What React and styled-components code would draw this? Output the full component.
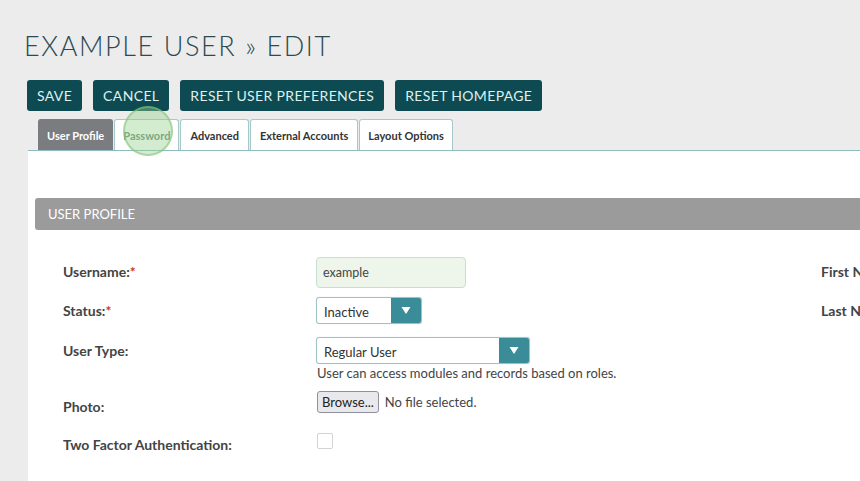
import React from 'react';
import styled, { createGlobalStyle } from 'styled-components';

const GlobalStyle = createGlobalStyle`
  html, body {
    margin: 0;
    padding: 0;
    background: #ececec;
    overflow: hidden;
  }
  body {
    font-family: Lato, "Open Sans", sans-serif;
    color: #444;
  }
`;

const Page = styled.div`
  position: relative;
  width: 860px;
  height: 481px;
  padding-top: 30px;
  box-sizing: border-box;
  display: flex;
  flex-direction: column;
  overflow: hidden;
`;

const Title = styled.h1`
  margin: 0 0 0 24px;
  font-weight: 300;
  font-size: 27px;
  line-height: 32px;
  letter-spacing: 1.6px;
  color: #2c4a50;
`;

const Toolbar = styled.div`
  display: flex;
  gap: 11px;
  margin: 18px 0 0 27px;
`;

const ActionButton = styled.button`
  height: 31px;
  padding: 0 10px;
  border: none;
  border-radius: 3px;
  background: #0e4a51;
  color: #dff0ef;
  font-family: Lato, sans-serif;
  font-size: 14px;
  letter-spacing: 0.35px;
  text-transform: uppercase;
`;

const TabBar = styled.div`
  display: flex;
  gap: 2px;
  margin: 8px 0 0 28px;
  padding-left: 10px;
  border-bottom: 1px solid #8fbcc0;
`;

const Tab = styled.div`
  height: 31px;
  display: flex;
  align-items: center;
  padding: 0 ${(p) => p.$pad}px;
  box-sizing: border-box;
  border: 1px solid ${(p) => (p.$active ? '#7a7c7f' : '#a6c8cb')};
  border-bottom: none;
  border-radius: 3px 3px 0 0;
  background: ${(p) => (p.$active ? '#7a7c7f' : '#fff')};
  color: ${(p) => (p.$active ? '#fff' : p.$muted ? '#6d8a78' : '#333')};
  font-size: 11px;
  font-weight: 700;
  margin-right: -1px;
`;

const Panel = styled.div`
  flex: 1;
  margin-left: 28px;
  background: #fff;
  padding: 47px 0 0 7px;
`;

const SectionBar = styled.div`
  height: 32px;
  display: flex;
  align-items: center;
  padding-left: 13px;
  background: #9b9b9b;
  border-radius: 3px 0 0 3px;
  color: #fff;
  font-size: 13px;
`;

const Form = styled.div`
  padding: 27px 0 0 28px;
  display: flex;
  flex-direction: column;
`;

const Row = styled.div`
  display: grid;
  grid-template-columns: 253px 505px 1fr;
  align-items: start;
  margin-top: ${(p) => p.$top || 0}px;
`;

const Label = styled.div`
  padding-top: ${(p) => p.$pt}px;
  font-size: 14px;
  line-height: 16px;
  font-weight: 700;
  color: #444;
  white-space: nowrap;
`;

const Required = styled.span`
  color: #c8332c;
`;

const TextInput = styled.div`
  width: 150px;
  height: 31px;
  box-sizing: border-box;
  padding-left: 6px;
  display: flex;
  align-items: center;
  background: #eef6ec;
  border: 1px solid #c7ded3;
  border-radius: 4px;
  font-size: 12.5px;
  color: #444;
`;

const Select = styled.div`
  width: ${(p) => p.$w}px;
  height: 27px;
  box-sizing: border-box;
  display: flex;
  border: 1px solid #9cc3c6;
  border-radius: 3px;
  background: #fff;
  overflow: hidden;
  box-shadow: 0 0 1px #b7d3d5;
`;

const SelectText = styled.div`
  flex: 1;
  padding-left: 7px;
  display: flex;
  align-items: center;
  padding-top: 3px;
  font-size: 13px;
  color: #333;
`;

const SelectArrow = styled.div`
  width: 30px;
  display: flex;
  align-items: center;
  justify-content: center;
  background: #3a8c98;
`;

const HelpText = styled.div`
  margin-top: 1px;
  padding-left: 1px;
  font-size: 13px;
  color: #444;
`;

const FileField = styled.div`
  display: flex;
  align-items: center;
  gap: 6px;
  padding-left: 1px;
  font-size: 13px;
  color: #444;
`;

const BrowseButton = styled.button`
  height: 22px;
  padding: 0 4px;
  background: #e9e9ed;
  border: 1px solid #8f8f9d;
  border-radius: 3px;
  font-family: Lato, sans-serif;
  font-size: 13px;
  color: #222;
`;

const Checkbox = styled.div`
  width: 16px;
  height: 16px;
  box-sizing: border-box;
  margin-left: 1px;
  border: 1px solid #d3d3d3;
  border-radius: 2px;
  background: #fff;
`;

const ClickMarker = styled.div`
  position: absolute;
  left: 123px;
  top: 106px;
  width: 50px;
  height: 50px;
  box-sizing: border-box;
  border-radius: 50%;
  background: rgba(150, 210, 140, 0.42);
  border: 2px solid rgba(130, 195, 120, 0.55);
  pointer-events: none;
`;

const Triangle = () => (
  <svg width="10" height="9" viewBox="0 0 10 9">
    <path d="M0.5 1 L9.5 1 L5 8 Z" fill="#fff" />
  </svg>
);

const Dropdown = ({ width, value }) => (
  <Select $w={width}>
    <SelectText>{value}</SelectText>
    <SelectArrow>
      <Triangle />
    </SelectArrow>
  </Select>
);

const tabs = [
  { name: 'User Profile', pad: 8, active: true },
  { name: 'Password', pad: 8, muted: true },
  { name: 'Advanced', pad: 9 },
  { name: 'External Accounts', pad: 9 },
  { name: 'Layout Options', pad: 8 },
];

export default function App() {
  return (
    <Page>
      <GlobalStyle />
      <Title>EXAMPLE USER » EDIT</Title>
      <Toolbar>
        <ActionButton>Save</ActionButton>
        <ActionButton>Cancel</ActionButton>
        <ActionButton>Reset User Preferences</ActionButton>
        <ActionButton>Reset Homepage</ActionButton>
      </Toolbar>
      <TabBar>
        {tabs.map((t) => (
          <Tab key={t.name} $active={t.active} $muted={t.muted} $pad={t.pad}>
            {t.name}
          </Tab>
        ))}
      </TabBar>
      <Panel>
        <SectionBar>USER PROFILE</SectionBar>
        <Form>
          <Row>
            <Label $pt={7}>
              Username:<Required>*</Required>
            </Label>
            <TextInput>example</TextInput>
            <Label $pt={7}>First Name:</Label>
          </Row>
          <Row $top={9}>
            <Label $pt={6}>
              Status:<Required>*</Required>
            </Label>
            <Dropdown width={106} value="Inactive" />
            <Label $pt={6}>Last Name:</Label>
          </Row>
          <Row $top={13}>
            <Label $pt={6}>User Type:</Label>
            <div>
              <Dropdown width={214} value="Regular User" />
              <HelpText>User can access modules and records based on roles.</HelpText>
            </div>
          </Row>
          <Row $top={10}>
            <Label $pt={8}>Photo:</Label>
            <FileField>
              <BrowseButton>Browse...</BrowseButton>
              <span>No file selected.</span>
            </FileField>
          </Row>
          <Row $top={18}>
            <Label $pt={4}>Two Factor Authentication:</Label>
            <Checkbox />
          </Row>
        </Form>
      </Panel>
      <ClickMarker />
    </Page>
  );
}
